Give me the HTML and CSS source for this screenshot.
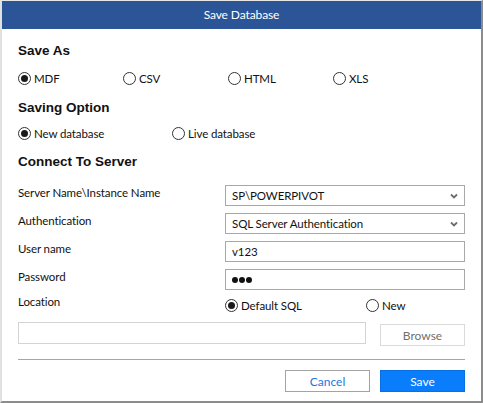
FILE: index.html
```html
<!DOCTYPE html>
<html>
<head>
  <title>Save Database</title>
<link rel="stylesheet" href="styles.css">
</head>
<body>
  <div class="window">
    <div class="titlebar">Save Database</div>
    <div class="content">
      <h3 class="head head-first">Save As</h3>
      <div class="radio_row r1">
        <label class="radio w105"><span class="dot on"></span>MDF</label>
        <label class="radio w105"><span class="dot"></span>CSV</label>
        <label class="radio w105"><span class="dot"></span>HTML</label>
        <label class="radio"><span class="dot"></span>XLS</label>
      </div>
      <h3 class="head h2">Saving Option</h3>
      <div class="radio_row r2">
        <label class="radio w154"><span class="dot on"></span>New database</label>
        <label class="radio"><span class="dot"></span>Live database</label>
      </div>
      <h3 class="head h3">Connect To Server</h3>
      <div class="form">
        <div class="lbl">Server Name\Instance Name</div>
        <div class="box select"><span>SP\POWERPIVOT</span>
          <svg width="8" height="6" viewBox="0 0 8 6"><path d="M1 1.5 L4 4.5 L7 1.5" fill="none" stroke="#6d6d6d" stroke-width="1.8"/></svg>
        </div>
        <div class="lbl">Authentication</div>
        <div class="box select"><span>SQL Server Authentication</span>
          <svg width="8" height="6" viewBox="0 0 8 6"><path d="M1 1.5 L4 4.5 L7 1.5" fill="none" stroke="#6d6d6d" stroke-width="1.8"/></svg>
        </div>
        <div class="lbl">User name</div>
        <div class="box"><span>v123</span></div>
        <div class="lbl">Password</div>
        <div class="box pwd"><i></i><i></i><i></i></div>
        <div class="lbl loc_lbl">Location</div>
        <div class="radio_row loc">
          <label class="radio w141"><span class="dot on"></span>Default SQL</label>
          <label class="radio"><span class="dot"></span>New</label>
        </div>
      </div>
      <div class="path_row">
        <div class="path"></div>
        <button class="btn browse">Browse</button>
      </div>
      <div class="sep"></div>
      <div class="actions">
        <button class="btn cancel">Cancel</button>
        <button class="btn save">Save</button>
      </div>
    </div>
  </div>
</body>
</html>
```

FILE: styles.css
```css
body {
  margin: 0;
  background-color: #fff;
  font-family: Lato, "Noto Sans", sans-serif;
  font-size: 11.5px;
  letter-spacing: -0.1px;
  color: #1a1a1a;
}
.window {
  width: 479px;
  height: 400px;
  border-top: 1px solid #e6e6e6;
  border-left: 2px solid #e1e1e1;
  border-right: 2px solid #8c8c8c;
  border-bottom: 2px solid #8c8c8c;
  background-color: #fff;
}
.titlebar {
  height: 28px;
  line-height: 28px;
  background-color: #2b5597;
  color: #fff;
  font-size: 12px;
  text-align: center;
}
.content {
  padding: 0 16px 0 16px;
}
.head {
  margin: 0;
  height: 20px;
  line-height: 20px;
  font-family: "Liberation Sans", Arial, sans-serif;
  font-size: 13.5px;
  font-weight: bold;
  letter-spacing: 0;
  color: #111;
}
.head-first {
  margin-top: 12px;
}
.h2 {
  margin-top: 10px;
}
.h3 {
  margin-top: 9px;
}
.radio_row {
  display: flex;
  align-items: center;
  height: 20px;
}
.r1 {
  margin-top: 7px;
}
.r2 {
  margin-top: 5px;
}
.radio {
  display: flex;
  align-items: center;
  gap: 3px;
  color: #111;
}
.w105 { width: 105px; }
.w154 { width: 154px; }
.w141 { width: 141px; }
.dot {
  box-sizing: border-box;
  width: 13px;
  height: 13px;
  border: 1px solid #333;
  border-radius: 50%;
  position: relative;
}
.dot.on::after {
  content: "";
  position: absolute;
  left: 2px;
  top: 2px;
  width: 7px;
  height: 7px;
  border-radius: 50%;
  background-color: #1e1a1a;
}
.form {
  display: grid;
  grid-template-columns: 207px 240px;
  row-gap: 7px;
  margin-top: 13px;
}
.lbl {
  height: 21px;
  line-height: 15px;
  color: #111;
}
.loc_lbl {
  line-height: 9px;
}
.box {
  box-sizing: border-box;
  height: 21px;
  border: 1px solid #a8a8a8;
  display: flex;
  align-items: center;
  justify-content: space-between;
  padding: 0 6px 0 6px;
  color: #111;
}
.pwd {
  justify-content: flex-start;
  gap: 1px;
}
.pwd i {
  width: 6px;
  height: 6px;
  border-radius: 50%;
  background-color: #111;
}
.loc {
  margin-top: 0;
  height: 16px;
}
.path_row {
  display: flex;
  justify-content: space-between;
  margin-top: 4px;
}
.path {
  width: 348px;
  height: 22px;
  box-sizing: border-box;
  border: 1px solid #d4d4d4;
}
.btn {
  box-sizing: border-box;
  width: 85px;
  height: 22px;
  font-family: Lato, "Noto Sans", sans-serif;
  font-size: 12px;
  background-color: #fff;
  padding: 0;
}
.browse {
  margin-top: 2px;
  border: 1px solid #dadada;
  color: #707070;
}
.sep {
  height: 1px;
  background-color: #a6a6a6;
  margin-top: 13px;
}
.actions {
  display: flex;
  justify-content: flex-end;
  gap: 10px;
  margin-top: 10px;
}
.cancel {
  border: 1px solid #a3a3a3;
  color: #1a78e0;
}
.save {
  border: 1px solid #0a6fe0;
  background-color: #0a7dfc;
  color: #fff;
}
```
